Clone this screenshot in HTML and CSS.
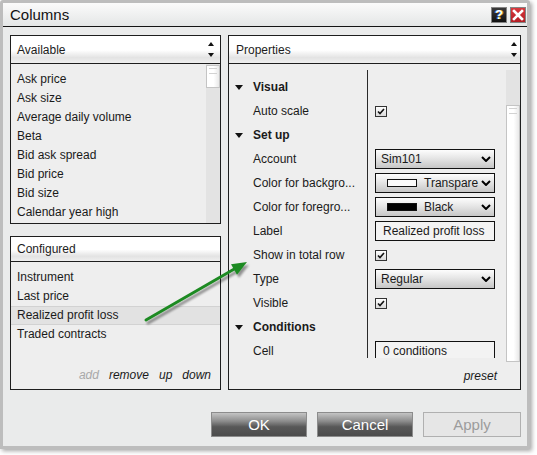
FILE: index.html
```html
<!DOCTYPE html>
<html>
<head>
<meta charset="utf-8">
<title>Columns</title>
<link rel="stylesheet" href="styles.css">
</head>
<body>
<div class="window">
  <div class="titlebar">
    <span class="title">Columns</span>
    <div class="tb-buttons">
      <span class="tb-help">?</span>
      <span class="tb-close"><svg width="12" height="12" viewBox="0 0 12 12"><path d="M2 2 L10 10 M10 2 L2 10" stroke="#fff" stroke-width="2.6" stroke-linecap="square"/></svg></span>
    </div>
  </div>
  <div class="content">
    <div class="main">
      <div class="left">
        <section class="panel available">
          <div class="phead"><span>Available</span><div class="arrows"><i class="up"></i><i class="down"></i></div></div>
          <div class="pbody row">
            <ul class="list">
              <li>Ask price</li>
              <li>Ask size</li>
              <li>Average daily volume</li>
              <li>Beta</li>
              <li>Bid ask spread</li>
              <li>Bid price</li>
              <li>Bid size</li>
              <li>Calendar year high</li>
            </ul>
            <div class="vscroll"><div class="thumb short"></div></div>
          </div>
        </section>
        <section class="panel configured">
          <div class="phead small"><span>Configured</span></div>
          <div class="pbody col">
            <ul class="list">
              <li>Instrument</li>
              <li>Last price</li>
              <li class="sel">Realized profit loss</li>
              <li>Traded contracts</li>
            </ul>
            <div class="links"><span class="dis">add</span><span>remove</span><span>up</span><span>down</span></div>
          </div>
        </section>
      </div>
      <section class="panel properties">
        <div class="phead"><span>Properties</span><div class="arrows"><i class="up"></i><i class="down"></i></div></div>
        <div class="pbody col">
          <div class="gridwrap">
            <div class="grid">
              <div class="names">
                <div class="cat"><i class="tri"></i>Visual</div>
                <div class="prop">Auto scale</div>
                <div class="cat"><i class="tri"></i>Set up</div>
                <div class="prop">Account</div>
                <div class="prop">Color for backgro...</div>
                <div class="prop">Color for foregro...</div>
                <div class="prop">Label</div>
                <div class="prop">Show in total row</div>
                <div class="prop">Type</div>
                <div class="prop">Visible</div>
                <div class="cat"><i class="tri"></i>Conditions</div>
                <div class="prop">Cell</div>
              </div>
              <div class="values">
                <div class="val"></div>
                <div class="val"><span class="check"><svg width="10" height="9" viewBox="0 0 10 9"><path d="M2 4.5 L4 6.5 L8 2" fill="none" stroke="#111" stroke-width="1.6"/></svg></span></div>
                <div class="val"></div>
                <div class="val"><div class="dropdown"><span class="dtext">Sim101</span><span class="chev"><svg width="10" height="6" viewBox="0 0 10 6"><path d="M1 1 L5 5 L9 1" fill="none" stroke="#000" stroke-width="2"/></svg></span></div></div>
                <div class="val"><div class="dropdown"><span class="swatch clear"></span><span class="dtext">Transpare</span><span class="chev"><svg width="10" height="6" viewBox="0 0 10 6"><path d="M1 1 L5 5 L9 1" fill="none" stroke="#000" stroke-width="2"/></svg></span></div></div>
                <div class="val"><div class="dropdown"><span class="swatch black"></span><span class="dtext">Black</span><span class="chev"><svg width="10" height="6" viewBox="0 0 10 6"><path d="M1 1 L5 5 L9 1" fill="none" stroke="#000" stroke-width="2"/></svg></span></div></div>
                <div class="val"><div class="textbox">Realized profit loss</div></div>
                <div class="val"><span class="check"><svg width="10" height="9" viewBox="0 0 10 9"><path d="M2 4.5 L4 6.5 L8 2" fill="none" stroke="#111" stroke-width="1.6"/></svg></span></div>
                <div class="val"><div class="dropdown"><span class="dtext">Regular</span><span class="chev"><svg width="10" height="6" viewBox="0 0 10 6"><path d="M1 1 L5 5 L9 1" fill="none" stroke="#000" stroke-width="2"/></svg></span></div></div>
                <div class="val"><span class="check"><svg width="10" height="9" viewBox="0 0 10 9"><path d="M2 4.5 L4 6.5 L8 2" fill="none" stroke="#111" stroke-width="1.6"/></svg></span></div>
                <div class="val"></div>
                <div class="val"><div class="textbox">0 conditions</div></div>
              </div>
            </div>
            <div class="vscroll tall"><div class="thumb long"></div></div>
          </div>
          <div class="preset">preset</div>
        </div>
      </section>
    </div>
    <div class="buttons">
      <button class="btn dark ok">OK</button>
      <button class="btn dark cancel">Cancel</button>
      <button class="btn disabled apply">Apply</button>
    </div>
  </div>
</div>
<svg class="pointer" width="537" height="455" viewBox="0 0 537 455">
  <defs>
    <filter id="sh" x="-30%" y="-30%" width="160%" height="160%">
      <feGaussianBlur in="SourceAlpha" stdDeviation="1.3"/>
      <feOffset dx="2" dy="3" result="o"/>
      <feComponentTransfer><feFuncA type="linear" slope="0.4"/></feComponentTransfer>
      <feMerge><feMergeNode/><feMergeNode in="SourceGraphic"/></feMerge>
    </filter>
  </defs>
  <g filter="url(#sh)">
    <line x1="146" y1="320" x2="236" y2="268" stroke="#1f8a22" stroke-width="3" stroke-linecap="round"/>
    <polygon points="247,262 231,264.3 237,274.7" fill="#1f8a22"/>
  </g>
</svg>
</body>
</html>
```
FILE: styles.css
```css
* { box-sizing: border-box; }
html, body { margin: 0; padding: 0; }
body {
  width: 537px;
  height: 455px;
  background: #ffffff;
  font-family: "Liberation Sans", Arial, sans-serif;
  font-size: 12px;
  color: #1a1a1a;
  position: relative;
  overflow: hidden;
}
.window {
  width: 530px;
  height: 449px;
  border: 3px solid #bdbdbd;
  border-radius: 3px 3px 0 0;
  background: #eaebeb;
  box-shadow: 2px 2px 4px rgba(0,0,0,0.35);
  display: flex;
  flex-direction: column;
}
.titlebar {
  height: 24px;
  flex: none;
  border-bottom: 1px solid #141414;
  background: linear-gradient(#fbfbfb, #e4e6e6);
  display: flex;
  align-items: center;
  padding: 0 1px 0 7px;
}
.title { font-size: 15px; color: #111; }
.tb-buttons { margin-left: auto; display: flex; gap: 3px; }
.tb-help, .tb-close {
  width: 16px; height: 16px;
  border: 1px solid #848484;
  display: flex; align-items: center; justify-content: center;
}
.tb-help {
  background: linear-gradient(#3a3a3a, #111);
  color: #fff;
  font-weight: bold;
  font-size: 13px;
  line-height: 14px;
  text-shadow: -1px 0 0 #3c6fd0, 1px 0 0 #c9a020;
}
.tb-close { background: linear-gradient(#d8393e, #b31f25); }

.content {
  flex: 1;
  display: flex;
  flex-direction: column;
  padding: 8px 6px 9px 7px;
}
.main { display: flex; gap: 7px; height: 355px; flex: none; }
.left { width: 211px; display: flex; flex-direction: column; gap: 12px; }
.panel {
  border: 1px solid #1e1e1e;
  background: #eeeeee;
  display: flex;
  flex-direction: column;
}
.available { height: 189px; flex: none; }
.configured { flex: 1; }
.properties { width: 293px; }
.phead {
  height: 28px;
  flex: none;
  border-bottom: 1px solid #1e1e1e;
  background: linear-gradient(#ffffff 0%, #ffffff 52%, #e3e3e3 80%, #efefef 100%);
  display: flex;
  align-items: center;
  padding-left: 6px;
  color: #1c1c1c;
}
.phead.small { height: 25px; }
.properties .phead { padding-left: 7px; }
.arrows {
  margin-left: auto;
  width: 12px;
  display: flex;
  flex-direction: column;
  align-items: center;
  gap: 7px;
}
.available .arrows { margin-right: 3px; }
.arrows i { display: block; width: 0; height: 0; border-left: 3px solid transparent; border-right: 3px solid transparent; }
.arrows .up { border-bottom: 4px solid #111; }
.arrows .down { border-top: 4px solid #111; }

.pbody { flex: 1; min-height: 0; }
.pbody.row { display: flex; }
.pbody.col { display: flex; flex-direction: column; }
.list { list-style: none; margin: 0; padding: 6px 0 0 0; flex: 1; }
.list li { height: 19px; line-height: 19px; padding-left: 6px; white-space: nowrap; }
.list li.sel {
  background: #e2e2e2;
  border-top: 1px solid #d2d2d2;
  border-bottom: 1px solid #d2d2d2;
  line-height: 17px;
}
.vscroll { width: 14px; flex: none; background: #e3e3e3; }
.thumb {
  border: 1px solid #c4c4c4;
  background: linear-gradient(to right, #ffffff 55%, #e9e9e9);
  position: relative;
}
.thumb::before {
  content: "";
  position: absolute;
  left: 2px; right: 2px; top: 2px;
  height: 4px;
  border-top: 1px solid #d2d2d2;
  border-bottom: 1px solid #d2d2d2;
}
.thumb.short { margin-top: 1px; height: 23px; }
.vscroll.tall { height: 292px; }
.thumb.long { margin-top: 35px; height: 257px; }

.links {
  display: flex;
  justify-content: flex-end;
  gap: 10px;
  font-style: italic;
  line-height: 16px;
  padding: 0 9px 6px 0;
}
.links .dis { color: #a9a9a9; }

.gridwrap { margin-top: 6px; height: 292px; display: flex; flex: none; }
.grid { flex: 1; height: 288px; overflow: hidden; display: flex; }
.names { width: 139px; border-right: 1px solid #2a2a2a; padding-top: 5px; flex: none; }
.values { flex: 1; padding: 5px 0 0 7px; }
.cat, .prop, .val { height: 24px; display: flex; align-items: center; white-space: nowrap; }
.cat { padding-left: 6px; font-weight: bold; }
.prop { padding-left: 24px; }
.tri {
  display: block; width: 0; height: 0;
  border-left: 4px solid transparent;
  border-right: 4px solid transparent;
  border-top: 5px solid #111;
  margin-right: 10px;
}
.check {
  width: 12px; height: 11px;
  border: 1px solid #333;
  background: linear-gradient(#ffffff, #d9d9d9);
  display: flex; align-items: center; justify-content: center;
}
.dropdown {
  width: 120px; height: 20px;
  border: 1px solid #111;
  background: linear-gradient(#fdfdfd 0%, #e6e6e6 45%, #c6c6c6 100%);
  display: flex;
  align-items: center;
  padding-left: 5px;
}
.dtext { flex: 1; white-space: nowrap; }
.chev { width: 14px; flex: none; display: flex; align-items: center; padding-left: 1px; }
.swatch { width: 30px; height: 8px; flex: none; margin: 0 7px 0 6px; border: 1px solid #111; }
.swatch.clear { background: #fafafa; }
.swatch.black { background: #000; }
.textbox {
  width: 120px; height: 20px;
  border: 1px solid #111;
  background: #f3f3f3;
  display: flex; align-items: center;
  padding-left: 7px;
  white-space: nowrap;
}
.preset {
  flex: 1;
  display: flex;
  align-items: center;
  justify-content: flex-end;
  padding-right: 23px;
  font-style: italic;
}

.buttons {
  flex: none;
  margin-top: 22px;
  display: flex;
  justify-content: flex-end;
  gap: 10px;
}
.btn {
  height: 25px;
  font-family: "Liberation Sans", Arial, sans-serif;
  font-size: 15px;
  padding: 0;
  margin: 0;
}
.ok, .cancel { width: 96px; }
.apply { width: 98px; }
.btn.dark {
  border: 1px solid #8c8c8c;
  color: #fff;
  background: linear-gradient(#c4c4c4 0%, #8d8d8d 35%, #585858 60%, #4c4c4c 100%);
}
.btn.disabled {
  border: 1px solid #b0b0b0;
  color: #9c9c9c;
  background: #e6e6e6;
}
.pointer { position: absolute; left: 0; top: 0; pointer-events: none; }
```
